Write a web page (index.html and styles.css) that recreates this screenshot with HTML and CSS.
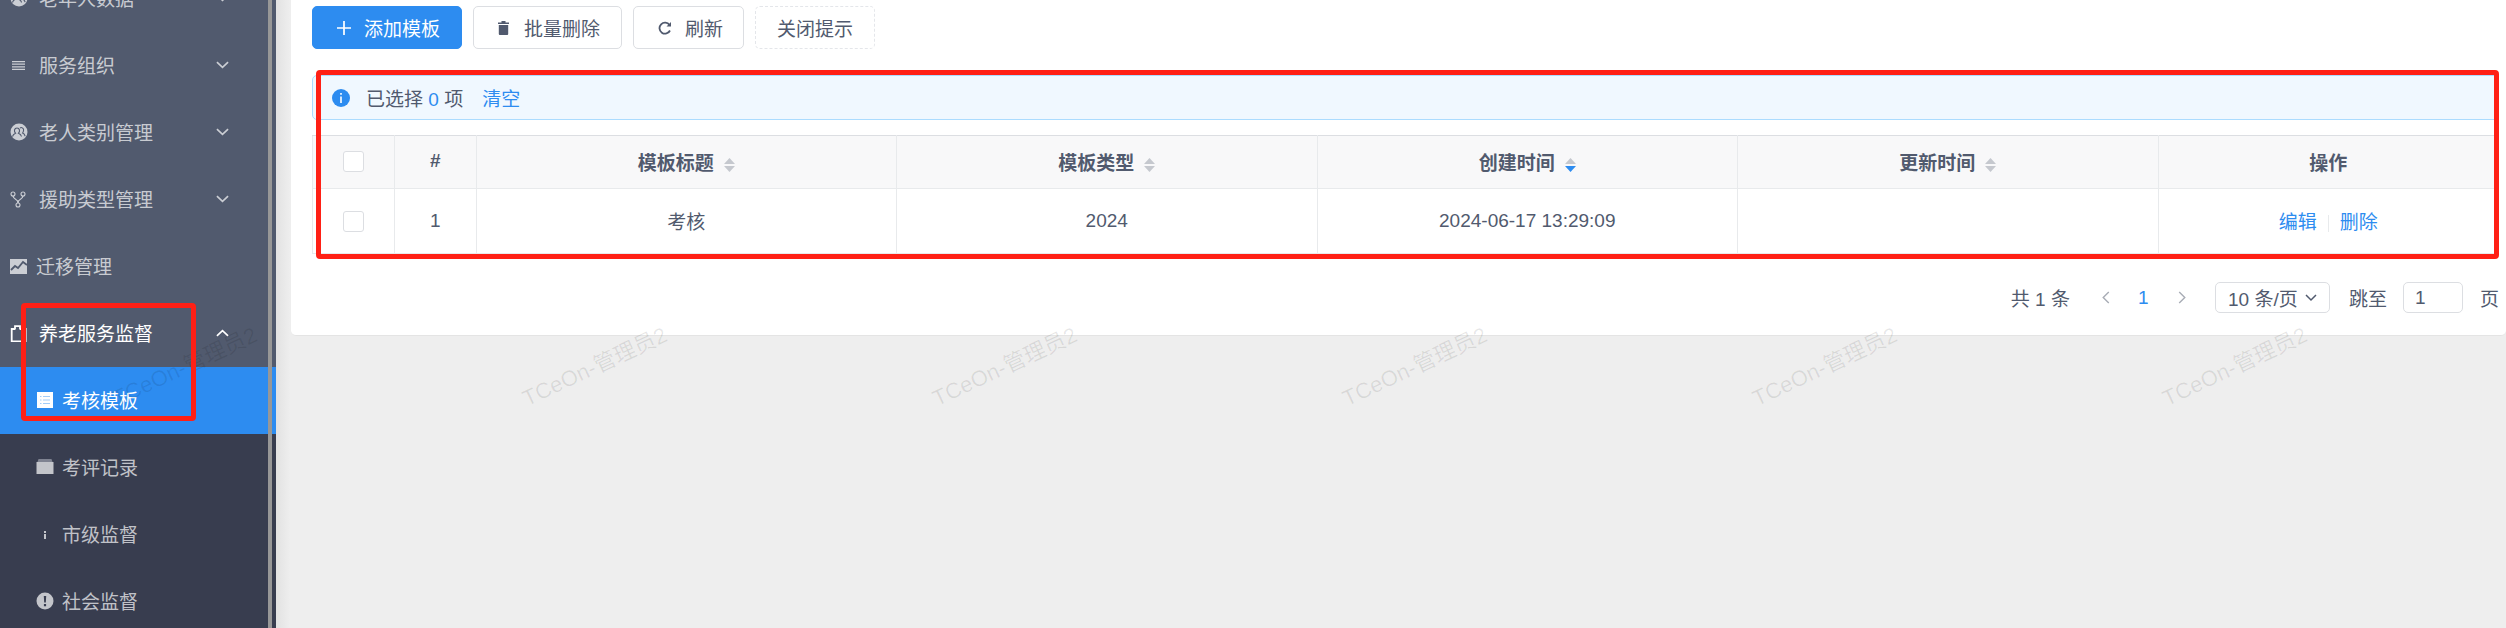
FILE: index.html
```html
<!DOCTYPE html>
<html lang="zh-CN">
<head>
    <meta charset="UTF-8">
    <title>考核模板</title>
    <link rel="stylesheet" href="styles.css">
</head>
<body>
    <div class="app">
        <aside class="sider">
            <ul class="menu">
                <li class="menu-item">
                    <svg class="menu-icon" viewBox="0 0 18 18"><circle cx="9" cy="9" r="8.500" fill="currentColor"/><path d="M2.500 13.500c.5-2 1.800-2.800 3-3.300-1-1-1.200-2-1-3.200.3-1.200 1.300-2 2.500-2s2.200.8 2.500 2c.2 1.200 0 2.200-1 3.200 1.300.5 2.600 1.300 3 3.300M10 5c1-.8 3-.5 3.500 1.200.3 1.400 0 2.800-.9 3.900 1.200.5 2.100 1.300 2.500 3" fill="none" stroke="#515a6e" stroke-width="1.100"/></svg>
                    <span class="menu-title">老年人数据</span>
                    <svg class="menu-arrow" viewBox="0 0 14 8"><path d="M1 1l6 5.500L13 1"/></svg>
                </li>
                <li class="menu-item">
                    <svg class="menu-icon" viewBox="0 0 18 18"><path d="M2 5h13v1.200H2zM2 7.600h13v1.200H2zM2 10.200h13v1.200H2zM2 12.800h13V14H2z" fill="currentColor"/></svg>
                    <span class="menu-title">服务组织</span>
                    <svg class="menu-arrow" viewBox="0 0 14 8"><path d="M1 1l6 5.500L13 1"/></svg>
                </li>
                <li class="menu-item">
                    <svg class="menu-icon" viewBox="0 0 18 18"><circle cx="9" cy="9" r="8.500" fill="currentColor"/><path d="M2.500 13.500c.5-2 1.800-2.800 3-3.300-1-1-1.200-2-1-3.200.3-1.200 1.300-2 2.500-2s2.200.8 2.500 2c.2 1.200 0 2.200-1 3.200 1.300.5 2.600 1.300 3 3.300M10 5c1-.8 3-.5 3.500 1.200.3 1.400 0 2.800-.9 3.900 1.200.5 2.100 1.300 2.500 3" fill="none" stroke="#515a6e" stroke-width="1.100"/></svg>
                    <span class="menu-title">老人类别管理</span>
                    <svg class="menu-arrow" viewBox="0 0 14 8"><path d="M1 1l6 5.500L13 1"/></svg>
                </li>
                <li class="menu-item">
                    <svg class="menu-icon" viewBox="0 0 18 18" fill="none" stroke="currentColor" stroke-width="1.100"><circle cx="3" cy="4" r="2"/><circle cx="13" cy="4" r="2"/><circle cx="8" cy="15" r="2"/><path d="M3 6c0 3.500 5 2.500 5 7M13 6c0 3.500-5 2.500-5 7"/></svg>
                    <span class="menu-title">援助类型管理</span>
                    <svg class="menu-arrow" viewBox="0 0 14 8"><path d="M1 1l6 5.500L13 1"/></svg>
                </li>
                <li class="menu-item menu-item-plain">
                    <svg class="menu-icon" viewBox="0 0 18 18"><path d="M0 2h17v15H0z" fill="currentColor"/><path d="M1 13l4-4 3 2 5-6 4 3" fill="none" stroke="#515a6e" stroke-width="1.800"/></svg>
                    <span class="menu-title">迁移管理</span>
                </li>
                <li class="menu-item menu-item-open">
                    <svg class="menu-icon" viewBox="0 0 18 18" fill="none" stroke="currentColor" stroke-width="1.800"><path d="M5 5H1.700v12.300h14V5H10"/><path d="M5 5.500V2.200h5v3.300"/></svg>
                    <span class="menu-title">养老服务监督</span>
                    <svg class="menu-arrow" viewBox="0 0 14 8"><path d="M1 7l6-5.500L13 7"/></svg>
                </li>
                <li class="menu-item menu-sub menu-sub-active">
                    <svg class="menu-icon" viewBox="0 0 16 16"><path d="M0 0h16v16H0z" fill="#fff"/><path d="M3 4h1.500v1H3zM6 4h7v1H6zM3 7.500h1.500v1H3zM6 7.500h7v1H6zM3 11h1.500v1H3zM6 11h7v1H6z" fill="#a3cdf9"/></svg>
                    <span class="menu-title">考核模板</span>
                </li>
                <li class="menu-item menu-sub">
                    <svg class="menu-icon" viewBox="0 0 18 18"><path d="M2.500 1h13l1 3h-15z" fill="#7f8391"/><path d="M.5 4h17v12H.5z" fill="currentColor"/></svg>
                    <span class="menu-title">考评记录</span>
                </li>
                <li class="menu-item menu-sub">
                    <svg class="menu-icon" viewBox="0 0 18 18"><path d="M8 6h2v2H8zM8 9h2v5H8z" fill="currentColor"/></svg>
                    <span class="menu-title">市级监督</span>
                </li>
                <li class="menu-item menu-sub">
                    <svg class="menu-icon" viewBox="0 0 18 18"><circle cx="9" cy="9" r="8.500" fill="currentColor"/><path d="M7.800 4h2.400l-.4 6.500H8.200zM7.900 12h2.200v2.200H7.900z" fill="#383d4f"/></svg>
                    <span class="menu-title">社会监督</span>
                </li>
            </ul>
            <div class="sider-bar"></div>
        </aside>

        <main class="main">
            <section class="card">
                <div class="toolbar">
                    <button class="btn btn-primary">
                        <svg class="btn-icon" viewBox="0 0 13 13"><path d="M5.700 0h1.600v5.700H13v1.600H7.300V13H5.700V7.300H0V5.700h5.700z" fill="currentColor"/></svg>
                        添加模板
                    </button>
                    <button class="btn">
                        <svg class="btn-icon btn-icon-small" viewBox="0 0 11 14"><path d="M3.500 0h4v1.500H11V3H0V1.500h3.500zM.8 4h9.400v9a1 1 0 0 1-1 1H1.800a1 1 0 0 1-1-1z" fill="currentColor"/></svg>
                        批量删除
                    </button>
                    <button class="btn btn-refresh">
                        <svg class="btn-icon" viewBox="0 0 14 14" fill="none" stroke="currentColor" stroke-width="1.800"><path d="M12 9.500A5.500 5.500 0 1 1 11.500 4"/><path d="M13 1v4.500H8.500z" fill="currentColor" stroke="none"/></svg>
                        刷新
                    </button>
                    <button class="btn btn-dashed">关闭提示</button>
                </div>

                <div class="alert">
                    <svg class="alert-icon" viewBox="0 0 18 18"><circle cx="9" cy="9" r="9" fill="#2d8cf0"/><path d="M8.200 4h1.600v1.800H8.200zM8.200 7.500h1.600V14H8.200z" fill="#fff"/></svg>
                    <span>已选择 <b class="alert-count">0</b> 项</span>
                    <a class="link alert-clear">清空</a>
                </div>

                <table class="table">
                    <colgroup>
                        <col class="col-check"><col class="col-index"><col class="col-data"><col class="col-data"><col class="col-data"><col class="col-data"><col>
                    </colgroup>
                    <thead>
                        <tr>
                            <th><span class="checkbox"></span></th>
                            <th>#</th>
                            <th>模板标题<svg class="sort" viewBox="0 0 11 14"><path d="M5.500 0L11 6H0z" fill="#c5c8ce"/><path d="M5.500 14L0 8h11z" fill="#c5c8ce"/></svg></th>
                            <th>模板类型<svg class="sort" viewBox="0 0 11 14"><path d="M5.500 0L11 6H0z" fill="#c5c8ce"/><path d="M5.500 14L0 8h11z" fill="#c5c8ce"/></svg></th>
                            <th>创建时间<svg class="sort" viewBox="0 0 11 14"><path d="M5.500 0L11 6H0z" fill="#c5c8ce"/><path d="M5.500 14L0 8h11z" fill="#2d8cf0"/></svg></th>
                            <th>更新时间<svg class="sort" viewBox="0 0 11 14"><path d="M5.500 0L11 6H0z" fill="#c5c8ce"/><path d="M5.500 14L0 8h11z" fill="#c5c8ce"/></svg></th>
                            <th>操作</th>
                        </tr>
                    </thead>
                    <tbody>
                        <tr>
                            <td><span class="checkbox"></span></td>
                            <td>1</td>
                            <td class="cell-text">考核</td>
                            <td>2024</td>
                            <td>2024-06-17 13:29:09</td>
                            <td></td>
                            <td class="cell-text"><a class="link">编辑</a><i class="divider"></i><a class="link">删除</a></td>
                        </tr>
                    </tbody>
                </table>

                <div class="pager">
                    <span class="pager-total">共 1 条</span>
                    <svg class="pager-arrow" viewBox="0 0 8 14"><path d="M7 1L1 7l6 6"/></svg>
                    <span class="pager-num">1</span>
                    <svg class="pager-arrow pager-next" viewBox="0 0 8 14"><path d="M1 1l6 6-6 6"/></svg>
                    <span class="pager-select">10 条/页<svg class="pager-caret" viewBox="0 0 12 8"><path d="M1 1l5 5 5-5"/></svg></span>
                    <span class="pager-jump">跳至</span>
                    <span class="pager-input">1</span>
                    <span>页</span>
                </div>
            </section>
        </main>
    </div>

    <!-- 水印 -->
    <div class="watermarks">
        <span>TCeOn-管理员2</span>
        <span>TCeOn-管理员2</span>
        <span>TCeOn-管理员2</span>
        <span>TCeOn-管理员2</span>
        <span>TCeOn-管理员2</span>
        <span>TCeOn-管理员2</span>
    </div>

    <!-- 红框标注 -->
    <div class="mark mark-menu"></div>
    <div class="mark mark-table"></div>
</body>
</html>
```

FILE: styles.css
```css
* {
    box-sizing: border-box;
}
body {
    margin: 0;
    height: 628px;
    overflow: hidden;
    position: relative;
    font-family: "Liberation Sans", "Noto Sans CJK SC", sans-serif;
    font-size: 19px;
    color: #515a6e;
    background-color: #eeeeee;
}
.app {
    display: flex;
    height: 628px;
}
.sider {
    flex: 0 0 276px;
    position: relative;
    overflow: hidden;
    background-color: #515a6e;
}
.sider-bar {
    position: absolute;
    top: 0;
    bottom: 0;
    left: 268px;
    width: 4px;
    background-color: #979797;
}
.menu {
    list-style: none;
    margin: -35px 0 0;
    padding: 0;
}
.menu-item {
    display: flex;
    align-items: center;
    height: 67px;
    padding: 0 47px 2px 10px;
    color: rgba(255, 255, 255, 0.7);
}
.menu-icon {
    flex: 0 0 18px;
    width: 18px;
    height: 18px;
    margin-right: 11px;
}
.menu-title {
    flex: 1;
}
.menu-arrow {
    width: 13px;
    height: 8px;
    fill: none;
    stroke: currentColor;
    stroke-width: 1.800;
}
.menu-item-plain .menu-icon {
    margin-right: 8px;
}
.menu-item-open {
    color: #fff;
}
.menu-sub {
    padding-left: 36px;
    background-color: #383d4f;
}
.menu-sub .menu-icon {
    margin-right: 8px;
}
.menu-sub-active {
    color: #fff;
    background-color: #2d8cf0;
}
.menu-sub-active .menu-icon {
    width: 16px;
    flex-basis: 16px;
    margin: 0 9px 0 1px;
}
.main {
    flex: 1;
    padding-left: 15px;
    background: linear-gradient(to right, #e2e2e2, #eeeeee 14px);
}
.card {
    height: 336px;
    padding: 6px 7px 0 21px;
    background-color: #fff;
    border-bottom: 1px solid #e4e4e4;
    border-radius: 0 0 5px 5px;
}
.toolbar {
    display: flex;
    gap: 11px;
}
.btn {
    display: flex;
    align-items: center;
    height: 43px;
    padding: 0 21px 0 24px;
    font: inherit;
    color: #515a6e;
    background-color: #fff;
    border: 1px solid #dcdee2;
    border-radius: 5px;
}
.btn-icon {
    width: 14px;
    height: 14px;
    margin-right: 13px;
}
.btn-icon-small {
    width: 11px;
    margin-right: 15px;
}
.btn-primary {
    color: #fff;
    background-color: #2d8cf0;
    border-color: #2d8cf0;
}
.btn-refresh {
    padding-right: 20px;
}
.btn-dashed {
    padding: 0 21px;
    border-style: dashed;
    border-color: #e4e6ea;
}
.alert {
    display: flex;
    align-items: center;
    height: 45px;
    margin-top: 26px;
    padding-left: 19px;
    background-color: #f0f8ff;
    border: 1px solid #abdcff;
    border-radius: 5px;
}
.alert-icon {
    width: 18px;
    height: 18px;
    margin-right: 16px;
}
.alert-count {
    font-weight: normal;
    color: #2d8cf0;
}
.alert-clear {
    margin-left: 19px;
}
.link {
    color: #2d8cf0;
}
.table {
    width: 100%;
    margin-top: 15px;
    table-layout: fixed;
    border-collapse: collapse;
    text-align: center;
}
.col-check {
    width: 82px;
}
.col-index {
    width: 81.500px;
}
.col-data {
    width: 420.500px;
}
.table th,
.table td {
    padding: 0;
    border: 1px solid #e8eaec;
}
.table th {
    height: 53px;
    padding-bottom: 2px;
    background-color: #f8f8f9;
    border-top-color: #dcdee2;
}
.table td {
    height: 65px;
}
.table .cell-text {
    padding-bottom: 2px;
}
.checkbox {
    display: inline-block;
    width: 21px;
    height: 21px;
    vertical-align: middle;
    background-color: #fff;
    border: 1px solid #dcdee2;
    border-radius: 3px;
}
.sort {
    width: 11px;
    height: 14px;
    margin-left: 10px;
    vertical-align: -2px;
}
.divider {
    display: inline-block;
    width: 1px;
    height: 17px;
    margin: 0 11px;
    vertical-align: -3px;
    background-color: #e8eaec;
}
.pager {
    display: flex;
    align-items: center;
    justify-content: flex-end;
    height: 31px;
    margin-top: 28px;
}
.pager-total {
    margin-right: 32px;
}
.pager-arrow {
    width: 8px;
    height: 13px;
    fill: none;
    stroke: #a8acb5;
    stroke-width: 1.500;
}
.pager-num {
    width: 11px;
    margin: 0 29px 0 28px;
    color: #2d8cf0;
}
.pager-next {
    margin-right: 29px;
}
.pager-select {
    display: flex;
    align-items: center;
    justify-content: space-between;
    width: 115px;
    height: 31px;
    padding: 0 12px;
    border: 1px solid #dcdee2;
    border-radius: 5px;
}
.pager-caret {
    width: 12px;
    height: 8px;
    fill: none;
    stroke: currentColor;
    stroke-width: 1.500;
}
.pager-jump {
    margin: 0 16px 0 19px;
}
.pager-input {
    width: 60px;
    height: 31px;
    margin-right: 17px;
    padding-left: 11px;
    line-height: 29px;
    border: 1px solid #dcdee2;
    border-radius: 5px;
}
.watermarks {
    position: absolute;
    top: 352px;
    left: -20px;
    display: flex;
    pointer-events: none;
}
.watermarks span {
    flex: 0 0 410px;
    line-height: 30px;
    font-size: 22px;
    text-align: center;
    color: rgba(0, 0, 0, 0.09);
    transform: rotate(-25deg);
}
.mark {
    position: absolute;
    border: 5px solid #ff2015;
    border-radius: 4px;
}
.mark-menu {
    top: 303px;
    left: 21px;
    width: 175px;
    height: 118px;
}
.mark-table {
    top: 70px;
    left: 316px;
    width: 2183px;
    height: 189px;
}
```
